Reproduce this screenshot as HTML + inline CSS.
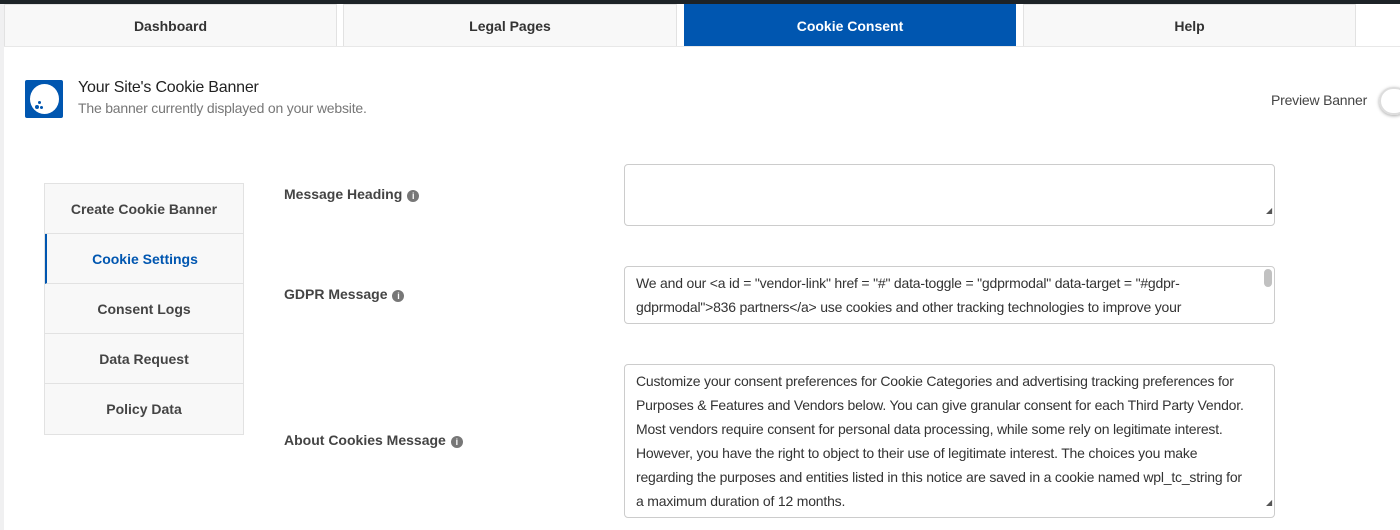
<!DOCTYPE html>
<html><head><meta charset="utf-8"><style>
*{box-sizing:border-box;margin:0;padding:0}
body{width:1400px;height:530px;overflow:hidden;background:#fff;font-family:"Liberation Sans",sans-serif;position:relative;color:#333}
.top{position:absolute;left:0;top:0;width:1400px;height:4px;background:#1d2327}
.lstrip{position:absolute;left:0;top:4px;width:4px;height:526px;background:#f0f0f1}
.tab{position:absolute;top:4px;height:42px;background:#f8f8f8;border:1px solid #e2e2e2;border-bottom:none;font-size:14px;text-align:center;line-height:42px;color:#333;font-weight:bold}
.tab.act{background:#0056b0;color:#fff;border-color:#0056b0}
.under{position:absolute;top:46px;left:4px;width:1396px;height:1px;background:#e8e8e8}
.logo{position:absolute;left:25px;top:80px;width:38px;height:38px;background:#0056b0;border-radius:2px}
.logo .c{position:absolute;left:5px;top:4px;width:29px;height:30px;background:#fff;border-radius:50%}
.d{position:absolute;background:#0056b0;border-radius:50%}
.t1{position:absolute;left:78px;top:79px;font-size:16px;color:#222;letter-spacing:-0.2px}
.t2{position:absolute;left:78px;top:100px;font-size:14px;color:#777;letter-spacing:-0.2px}
.pv{position:absolute;left:1271px;top:92px;font-size:14px;color:#444;letter-spacing:-0.2px}
.tg{position:absolute;left:1379px;top:87px;width:30px;height:28px;border-radius:14px;border:2px solid #ddd;box-shadow:0 1px 3px #aaa}
.menu{position:absolute;left:44px;top:183px;width:200px;border:1px solid #e2e2e2;background:#f8f8f8}
.menu div{height:50px;line-height:50px;text-align:center;font-size:14px;color:#444;border-bottom:1px solid #e2e2e2;font-weight:bold}
.menu div:last-child{border-bottom:none}
.menu .a{color:#0056b0;border-left:2px solid #0056b0}
.lb{position:absolute;left:284px;font-size:14px;color:#444;font-weight:bold}
.i{display:inline-block;width:12px;height:12px;border-radius:50%;background:#777;color:#fff;font-size:9px;line-height:12px;text-align:center;vertical-align:0;margin-left:5px}
.ta{position:absolute;left:624px;width:651px;border:1px solid #ccc;border-radius:4px;padding:3px 11px;font-size:14px;line-height:24px;color:#333;overflow:hidden;letter-spacing:-0.2px;white-space:nowrap}
.ta span.rs{position:absolute;right:2px;bottom:2px;font-size:8px;color:#555}
.sb{position:absolute;right:2px;top:2px;width:8px;height:18px;background:#c1c1c1;border-radius:4px}
</style></head><body>
<div class="top"></div><div class="lstrip"></div>
<div class="tab" style="left:4px;width:333px">Dashboard</div>
<div class="tab" style="left:343px;width:334px">Legal Pages</div>
<div class="tab act" style="left:684px;width:332px">Cookie Consent</div>
<div class="tab" style="left:1023px;width:333px">Help</div>
<div class="under"></div>
<div class="logo"><div class="c"></div><div class="d" style="left:10px;top:25px;width:4px;height:4px"></div><div class="d" style="left:13px;top:21px;width:3px;height:3px"></div><div class="d" style="left:15px;top:26px;width:3px;height:3px"></div></div>
<div class="t1">Your Site's Cookie Banner</div>
<div class="t2">The banner currently displayed on your website.</div>
<div class="pv">Preview Banner</div>
<div class="tg"></div>
<div class="menu"><div>Create Cookie Banner</div><div class="a">Cookie Settings</div><div>Consent Logs</div><div>Data Request</div><div>Policy Data</div></div>
<div class="lb" style="top:186px">Message Heading<span class="i">i</span></div>
<div class="lb" style="top:286px">GDPR Message<span class="i">i</span></div>
<div class="lb" style="top:432px">About Cookies Message<span class="i">i</span></div>
<div class="ta" style="top:164px;height:62px"><span class="rs">◢</span></div>
<div class="ta" style="top:266px;height:58px;padding-top:4px">We and our &lt;a id = "vendor-link" href = "#" data-toggle = "gdprmodal" data-target = "#gdpr-<br>gdprmodal"&gt;836 partners&lt;/a&gt; use cookies and other tracking technologies to improve your<br>experience<div class="sb"></div></div>
<div class="ta" style="top:364px;height:154px;padding-top:4px">Customize your consent preferences for Cookie Categories and advertising tracking preferences for<br>Purposes &amp; Features and Vendors below. You can give granular consent for each Third Party Vendor.<br>Most vendors require consent for personal data processing, while some rely on legitimate interest.<br>However, you have the right to object to their use of legitimate interest. The choices you make<br>regarding the purposes and entities listed in this notice are saved in a cookie named wpl_tc_string for<br>a maximum duration of 12 months.<span class="rs">◢</span></div>
</body></html>
